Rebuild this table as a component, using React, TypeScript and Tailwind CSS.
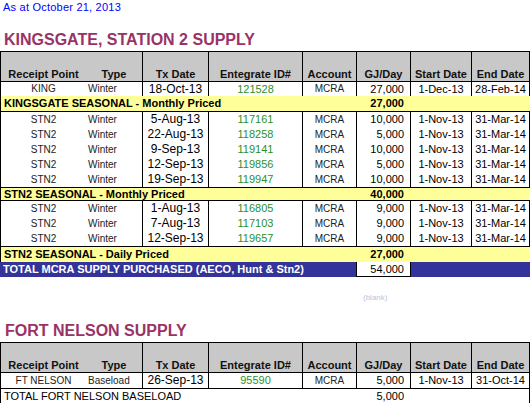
import React from 'react';

type Row = { rp: string; type: string; tx: string; id: string; acct: string; gj: string; start: string; end: string };

const king: Row[] = [
  { rp: 'KING', type: 'Winter', tx: '18-Oct-13', id: '121528', acct: 'MCRA', gj: '27,000', start: '1-Dec-13', end: '28-Feb-14' },
];

const group1: Row[] = [
  { rp: 'STN2', type: 'Winter', tx: '5-Aug-13', id: '117161', acct: 'MCRA', gj: '10,000', start: '1-Nov-13', end: '31-Mar-14' },
  { rp: 'STN2', type: 'Winter', tx: '22-Aug-13', id: '118258', acct: 'MCRA', gj: '5,000', start: '1-Nov-13', end: '31-Mar-14' },
  { rp: 'STN2', type: 'Winter', tx: '9-Sep-13', id: '119141', acct: 'MCRA', gj: '10,000', start: '1-Nov-13', end: '31-Mar-14' },
  { rp: 'STN2', type: 'Winter', tx: '12-Sep-13', id: '119856', acct: 'MCRA', gj: '5,000', start: '1-Nov-13', end: '31-Mar-14' },
  { rp: 'STN2', type: 'Winter', tx: '19-Sep-13', id: '119947', acct: 'MCRA', gj: '10,000', start: '1-Nov-13', end: '31-Mar-14' },
];

const group2: Row[] = [
  { rp: 'STN2', type: 'Winter', tx: '1-Aug-13', id: '116805', acct: 'MCRA', gj: '9,000', start: '1-Nov-13', end: '31-Mar-14' },
  { rp: 'STN2', type: 'Winter', tx: '7-Aug-13', id: '117103', acct: 'MCRA', gj: '9,000', start: '1-Nov-13', end: '31-Mar-14' },
  { rp: 'STN2', type: 'Winter', tx: '12-Sep-13', id: '119657', acct: 'MCRA', gj: '9,000', start: '1-Nov-13', end: '31-Mar-14' },
];

const fortNelson: Row[] = [
  { rp: 'FT NELSON', type: 'Baseload', tx: '26-Sep-13', id: '95590', acct: 'MCRA', gj: '5,000', start: '1-Nov-13', end: '31-Oct-14' },
];

function DataRow({ r, h = 'h-[15px] leading-[15px]' }: { r: Row; h?: string }) {
  return (
    <div className={`flex ${h} border-l border-black`}>
      <div className="flex w-[142px] border-r border-black text-[10px] text-[#222]">
        <div className="w-[85px] text-center">{r.rp}</div>
        <div className="pl-[2px]">{r.type}</div>
      </div>
      <div className="w-[66px] border-r border-black text-center text-[12px] text-black">{r.tx}</div>
      <div className="w-[94px] border-r border-black text-center text-[11px] text-[#2d8f2d]">{r.id}</div>
      <div className="w-[54px] border-r border-black text-center text-[10px] text-[#222]">{r.acct}</div>
      <div className="w-[54px] border-r border-black pr-[6px] text-right text-[11px] text-black">{r.gj}</div>
      <div className="w-[61px] border-r border-black text-center text-[11px] text-black">{r.start}</div>
      <div className="w-[58px] border-r border-black text-center text-[11px] text-black">{r.end}</div>
    </div>
  );
}

function Header() {
  return (
    <div className="flex h-[31px] items-stretch border-y border-l border-black bg-[#c8c8c8] text-[11px] font-bold leading-[13px] text-[#111]">
      <div className="flex w-[142px] items-end border-r border-black">
        <div className="w-[85px] text-center">Receipt Point</div>
        <div className="w-[56px] text-center">Type</div>
      </div>
      <div className="flex w-[66px] items-end justify-center border-r border-black">Tx Date</div>
      <div className="flex w-[94px] items-end justify-center border-r border-black">Entegrate ID#</div>
      <div className="flex w-[54px] items-end justify-center border-r border-black">Account</div>
      <div className="flex w-[54px] items-end justify-center border-r border-black">GJ/Day</div>
      <div className="flex w-[61px] items-end justify-center border-r border-black">Start Date</div>
      <div className="flex w-[58px] items-end justify-center border-r border-black">End Date</div>
    </div>
  );
}

function YellowRow({ label, total, h = 'h-[15px] leading-[15px]' }: { label: string; total: string; h?: string }) {
  return (
    <div className={`flex ${h} border-l border-black bg-[#ffff99] text-[11px] font-bold text-black`}>
      <div className="w-[356px] pl-[3px]">{label}</div>
      <div className="w-[54px] pr-[7px] text-right">{total}</div>
    </div>
  );
}

export default function App() {
  return (
    <div className="w-[530px] h-[403px] overflow-hidden bg-white font-['Liberation_Sans',Arial,sans-serif]">
      <div className="h-[30px] pl-[3px] text-[11px] leading-[14px] tracking-[0.02em] text-[#0000ff]">
        As at October 21, 2013
      </div>
      <div className="h-[21px] pl-[4px] text-[16px] font-bold leading-[20px] text-[#993366]">
        KINGSGATE, STATION 2 SUPPLY
      </div>

      <div className="w-[530px]">
        <Header />
        {king.map((r, i) => (
          <DataRow key={i} r={r} h="h-[14px] leading-[14px]" />
        ))}
        <YellowRow label="KINGSGATE SEASONAL - Monthly Priced" total="27,000" />
        <div className="border-y border-black">
          {group1.map((r, i) => (
            <DataRow key={i} r={r} />
          ))}
        </div>
        <YellowRow label="STN2 SEASONAL - Monthly Priced" total="40,000" h="h-[12px] leading-[12px]" />
        <div className="border-y border-black">
          {group2.map((r, i) => (
            <DataRow key={i} r={r} />
          ))}
        </div>
        <YellowRow label="STN2 SEASONAL - Daily Priced" total="27,000" />
        <div className="flex h-[15px] bg-[#333399] text-[11px] font-bold leading-[15px]">
          <div className="w-[356px] pl-[3px] text-white">TOTAL MCRA SUPPLY PURCHASED (AECO, Hunt &amp; Stn2)</div>
          <div className="w-[55px] border-x border-b border-black bg-white pr-[6px] text-right font-normal text-black">54,000</div>
          <div className="w-[119px]" />
        </div>
      </div>

      <div className="flex h-[44px] justify-start pl-[363px] pt-[16px]">
        <span className="text-[8px] leading-[10px] text-[#b8c4e0]">(blank)</span>
      </div>

      <div className="h-[21px] pl-[5px] text-[16px] font-bold leading-[20px] text-[#993366]">
        FORT NELSON SUPPLY
      </div>
      <div className="w-[530px]">
        <Header />
        {fortNelson.map((r, i) => (
          <DataRow key={i} r={r} />
        ))}
        <div className="flex h-[16px] border border-black text-[11px] leading-[14px] text-black">
          <div className="w-[355px] pl-[3px]">TOTAL FORT NELSON BASELOAD</div>
          <div className="w-[54px] pr-[6px] text-right">5,000</div>
        </div>
      </div>
    </div>
  );
}
